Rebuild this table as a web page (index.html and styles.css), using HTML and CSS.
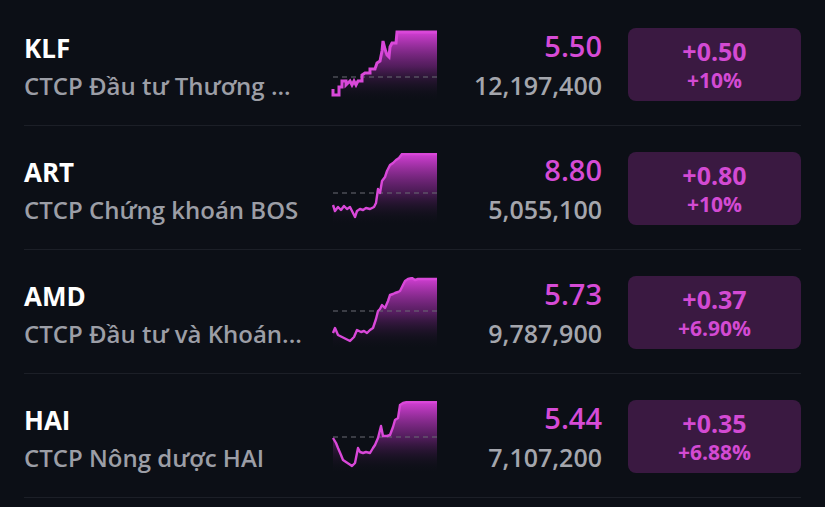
FILE: index.html
```html
<!DOCTYPE html>
<html lang="vi">
<head>
<meta charset="utf-8">
<title>Cổ phiếu tăng giá</title>
<link rel="stylesheet" href="styles.css">
</head>
<body>
<svg class="defs" width="0" height="0" aria-hidden="true">
  <defs>
    <linearGradient id="fillGrad" x1="0" y1="0" x2="0" y2="1">
      <stop offset="0" stop-color="#d23fd4" stop-opacity="1"/>
      <stop offset="0.5" stop-color="#80268a" stop-opacity="0.6"/>
      <stop offset="1" stop-color="#0c0f16" stop-opacity="0"/>
    </linearGradient>
  </defs>
</svg>
<main class="list">
  <div class="row">
    <div class="info">
      <div class="ticker">KLF</div>
      <div class="name">CTCP Đầu tư Thương ...</div>
    </div>
    <svg class="chart" viewBox="0 0 110 72" width="110" height="72">
      <path class="area" d="M3,62 L6,60 L6,64 L9,58 L12,58 L12,52 L16,50 L18,54 L20,50 L22,54 L24,50 L26,54 L28,50 L32,50 L32,46 L35,44 L40,44 L44,40 L47,40 L47,34 L50,32 L52,22 L53,12 L55,20 L57,26 L59,28 L60,18 L62,14 L66,14 L67,3 L107,3 L107,72 L3,72 Z"/>
      <line class="ref" x1="3" y1="48" x2="107" y2="48"/>
      <path class="line thick" d="M3,60 L3,66 L9,66 L9,58 L12,58 L12,52 L16,52 L16,56 L20,52 L22,56 L24,52 L26,56 L28,52 L32,52 L32,46 L35,44 L40,44 L40,40 L45,40 L47,34 L50,32 L52,22 L53,12 L55,20 L57,26 L59,28 L60,18 L62,14 L66,14 L67,3 L107,3"/>
    </svg>
    <div class="quote">
      <div class="price">5.50</div>
      <div class="volume">12,197,400</div>
    </div>
    <div class="badge">
      <div class="change">+0.50</div>
      <div class="pct">+10%</div>
    </div>
  </div>

  <div class="row">
    <div class="info">
      <div class="ticker">ART</div>
      <div class="name">CTCP Chứng khoán BOS</div>
    </div>
    <svg class="chart" viewBox="0 0 110 72" width="110" height="72">
      <path class="area" d="M3,52 L5,58 L8,54 L11,57 L14,53 L17,56 L20,54 L23,60 L25,64 L27,58 L30,56 L33,57 L36,55 L40,56 L44,54 L46,50 L48,36 L50,40 L52,28 L55,24 L57,18 L60,12 L63,10 L66,7 L69,5 L72,1 L107,1 L107,72 L3,72 Z"/>
      <line class="ref" x1="3" y1="40" x2="107" y2="40"/>
      <path class="line" d="M3,52 L5,58 L8,54 L11,57 L14,53 L17,56 L20,54 L23,60 L25,64 L27,58 L30,56 L33,57 L36,55 L40,56 L44,54 L46,50 L48,36 L50,40 L52,28 L55,24 L57,18 L60,12 L63,10 L66,7 L69,5 L72,1 L107,1"/>
    </svg>
    <div class="quote">
      <div class="price">8.80</div>
      <div class="volume">5,055,100</div>
    </div>
    <div class="badge">
      <div class="change">+0.80</div>
      <div class="pct">+10%</div>
    </div>
  </div>

  <div class="row">
    <div class="info">
      <div class="ticker">AMD</div>
      <div class="name">CTCP Đầu tư và Khoán...</div>
    </div>
    <svg class="chart" viewBox="0 0 110 72" width="110" height="72">
      <path class="area" d="M3,56 L5,51 L8,58 L12,60 L16,62 L20,64 L24,60 L27,53 L31,55 L34,54 L37,56 L40,53 L43,51 L46,42 L48,34 L50,32 L52,28 L55,31 L58,24 L60,18 L63,17 L65,16 L68,15 L70,14 L73,8 L75,4 L78,2 L82,1 L85,3 L88,2 L107,2 L107,72 L3,72 Z"/>
      <line class="ref" x1="3" y1="34" x2="107" y2="34"/>
      <path class="line" d="M3,56 L5,51 L8,58 L12,60 L16,62 L20,64 L24,60 L27,53 L31,55 L34,54 L37,56 L40,53 L43,51 L46,42 L48,34 L50,32 L52,28 L55,31 L58,24 L60,18 L63,17 L65,16 L68,15 L70,14 L73,8 L75,4 L78,2 L82,1 L85,3 L88,2 L107,2"/>
    </svg>
    <div class="quote">
      <div class="price">5.73</div>
      <div class="volume">9,787,900</div>
    </div>
    <div class="badge">
      <div class="change">+0.37</div>
      <div class="pct">+6.90%</div>
    </div>
  </div>

  <div class="row">
    <div class="info">
      <div class="ticker">HAI</div>
      <div class="name">CTCP Nông dược HAI</div>
    </div>
    <svg class="chart" viewBox="0 0 110 72" width="110" height="72">
      <path class="area" d="M3,37 L6,42 L8,47 L11,54 L13,59 L16,61 L19,63 L22,65 L25,62 L28,47 L30,51 L33,52 L36,51 L40,52 L43,47 L45,44 L48,37 L51,25 L53,35 L57,35 L60,34 L63,26 L65,19 L68,17 L70,4 L73,2 L77,1 L107,1 L107,72 L3,72 Z"/>
      <line class="ref" x1="3" y1="36" x2="107" y2="36"/>
      <path class="line" d="M3,37 L6,42 L8,47 L11,54 L13,59 L16,61 L19,63 L22,65 L25,62 L28,47 L30,51 L33,52 L36,51 L40,52 L43,47 L45,44 L48,37 L51,25 L53,35 L57,35 L60,34 L63,26 L65,19 L68,17 L70,4 L73,2 L77,1 L107,1"/>
    </svg>
    <div class="quote">
      <div class="price">5.44</div>
      <div class="volume">7,107,200</div>
    </div>
    <div class="badge">
      <div class="change">+0.35</div>
      <div class="pct">+6.88%</div>
    </div>
  </div>
</main>
</body>
</html>
```

FILE: styles.css
```css
html, body {
  margin: 0;
  padding: 0;
  background: #0c0f16;
  width: 825px;
  height: 507px;
  overflow: hidden;
  font-family: "Open Sans", "Noto Sans", sans-serif;
}

.defs {
  position: absolute;
  width: 0;
  height: 0;
}

.list {
  padding-top: 2px;
}

.row {
  margin: 0 24px;
  padding: 26px 0 24px;
  border-bottom: 1px solid #1c1f27;
  display: grid;
  grid-template-columns: 306px 110px 1fr 173px;
  align-items: center;
  height: 73px;
}

.info {
  display: flex;
  flex-direction: column;
  gap: 8px;
  margin-top: 5px;
}

.ticker {
  color: #ffffff;
  font-size: 26px;
  font-weight: 700;
  line-height: 30px;
}

.name {
  color: #9c9ea6;
  font-size: 24px;
  font-weight: 600;
  line-height: 30px;
  white-space: nowrap;
}

.chart {
  display: block;
}

.chart .area {
  fill: url(#fillGrad);
}

.chart .line {
  fill: none;
  stroke: #d948d9;
  stroke-width: 2.4;
  stroke-linejoin: round;
}

.chart .line.thick {
  stroke-width: 3;
  stroke-linejoin: miter;
}

.chart .ref {
  stroke: #6b6d75;
  stroke-width: 1.2;
  stroke-dasharray: 5 4;
}

.quote {
  padding-right: 26px;
  text-align: right;
  display: flex;
  flex-direction: column;
  gap: 8px;
}

.price {
  color: #d64bd6;
  font-size: 29px;
  font-weight: 600;
  line-height: 32px;
}

.volume {
  color: #a4a6ad;
  font-size: 25px;
  font-weight: 600;
  line-height: 30px;
}

.badge {
  height: 73px;
  background: #3a1941;
  border-radius: 8px;
  display: flex;
  flex-direction: column;
  align-items: center;
  justify-content: center;
  gap: 3px;
  color: #d34ad3;
  font-weight: 700;
}

.change {
  font-size: 25px;
  line-height: 28px;
}

.pct {
  font-size: 21px;
  line-height: 24px;
}
```
